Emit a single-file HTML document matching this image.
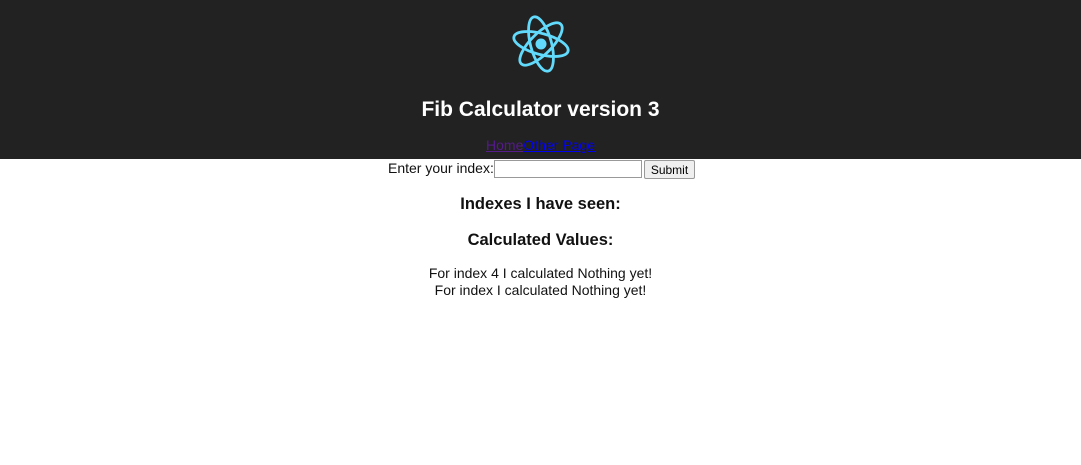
<!DOCTYPE html>
<html><head><meta charset="utf-8"><style>
html,body{margin:0;padding:0;width:1081px;height:465px;background:#fff;overflow:hidden;font-family:"Liberation Sans",Arial,sans-serif;color:#111}
.hdr{position:absolute;left:0;top:0;width:1081px;height:159px;background:#222}
.t{position:absolute;left:0;width:1081px;text-align:center}
h1{margin:0;font-size:21px;font-weight:bold;color:#fff}
a{font-size:14px}
.b{font-weight:bold;font-size:16.5px}
input{position:absolute;left:494px;top:160px;width:146px;height:16px;border:1px solid #999;padding:0;margin:0}
button{position:absolute;left:644px;top:160px;width:51px;height:19px;font-size:12px;font-family:"Liberation Sans",sans-serif;background:#efefef;border:1px solid #999;border-radius:2px;padding:0}
</style></head><body>
<div class="hdr"></div>
<svg style="position:absolute;left:511px;top:14px" width="60" height="60" viewBox="-30 -30 60 60">
<g fill="none" stroke="#61dafb" stroke-width="2.8">
<ellipse rx="28" ry="10.5" transform="rotate(15)"/>
<ellipse rx="28" ry="10.5" transform="rotate(75)"/>
<ellipse rx="28" ry="10.5" transform="rotate(135)"/>
</g><circle r="5.5" fill="#61dafb"/></svg>
<div class="t" style="top:98px"><h1>Fib Calculator version 3</h1></div>
<div class="t" style="top:137px"><a href="#" style="color:#551a8b">Home</a><a href="#" style="color:#0000ee">Other Page</a></div>
<div style="position:absolute;left:388px;top:160px;font-size:14px">Enter your index:</div>
<input type="text"><button>Submit</button>
<div class="t b" style="top:195px">Indexes I have seen:</div>
<div class="t b" style="top:231px">Calculated Values:</div>
<div class="t" style="top:265px;font-size:14px;line-height:17px">For index 4 I calculated Nothing yet!<br>For index I calculated Nothing yet!</div>
</body></html>
